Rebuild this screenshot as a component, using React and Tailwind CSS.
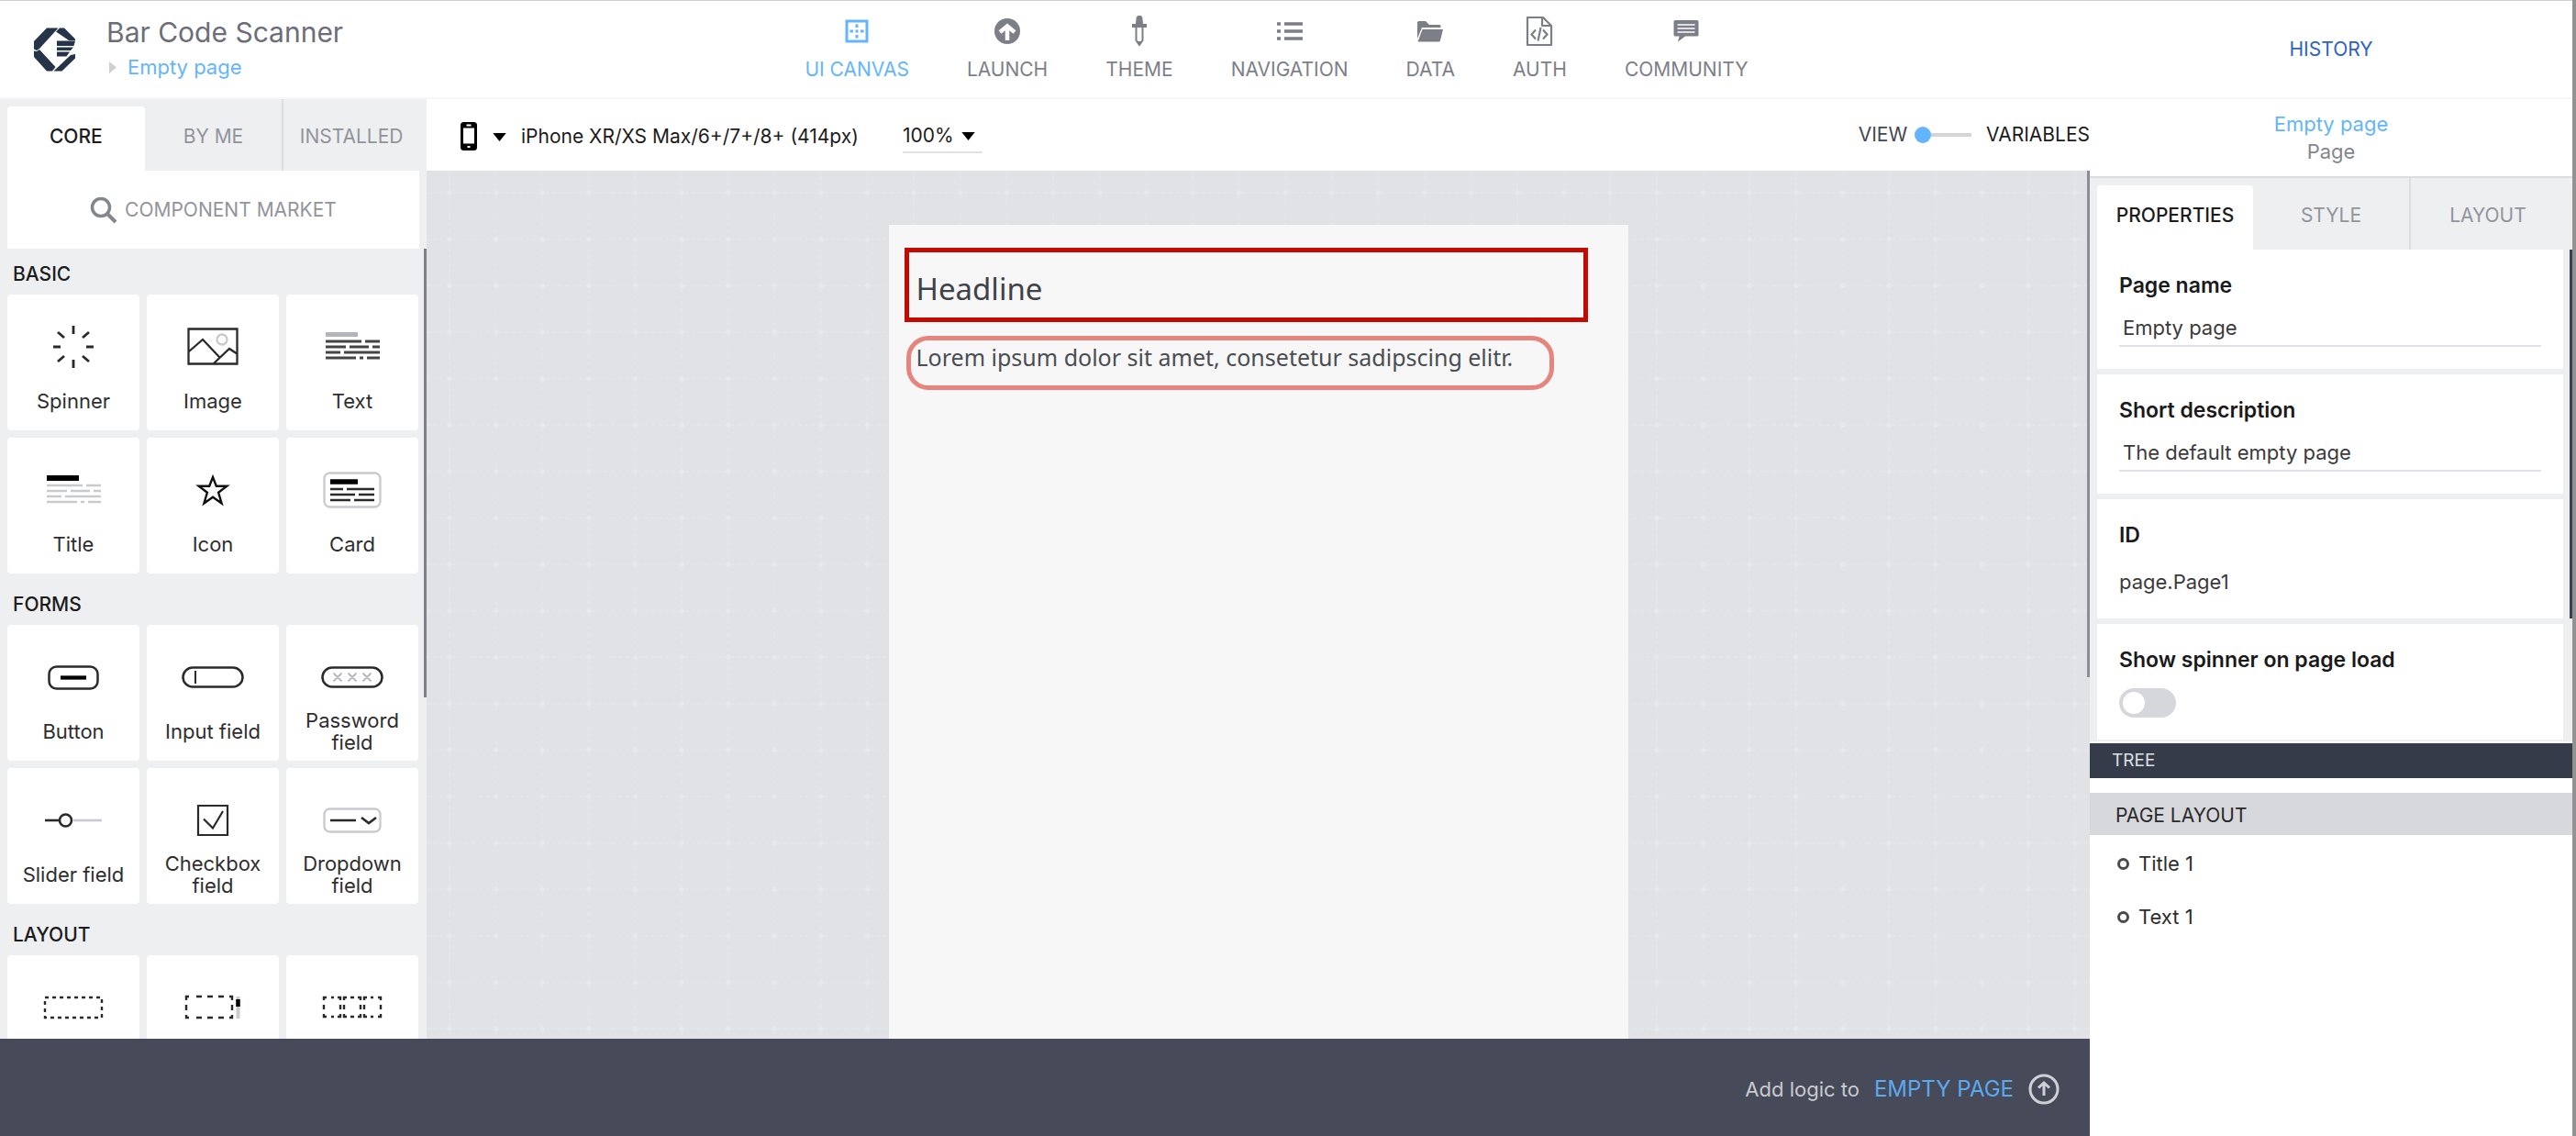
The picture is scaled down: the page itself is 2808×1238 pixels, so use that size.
import React from "react";

const ink = "#2a2a2a";
const pale = "#c9cacf";

/* ---------- component tile drawings ---------- */

const SpinnerArt = () => (
  <svg width="46" height="48" viewBox="0 0 46 48" stroke={ink} strokeWidth="2.800" fill="none">
    <path d="M23 1v9M23 38v9M1 24h8M37 24h8M6 8l7 6M40 8l-7 6M6 40l7-6M40 40l-7-6" />
  </svg>
);

const ImageArt = () => (
  <svg width="56" height="42" viewBox="0 0 56 42" stroke={ink} strokeWidth="2.300" fill="none">
    <circle cx="38" cy="13" r="5.5" stroke={pale} />
    <path d="M1.5 1.5h53v38h-53zM2 26l15-13 18 19M28 40l18-17 9 6" />
  </svg>
);

const textLines = "M0 10h39M43 10h16M0 16h22M26 16h21M51 16h8M0 22h16M20 22h39M0 28h33M37 28h4M45 28h14";

const TextArt = () => (
  <svg width="59" height="32" viewBox="0 0 59 32" fill="none">
    <path d="M0 2.5h35" stroke="#b4b5bb" strokeWidth="5" />
    <path d={textLines} stroke="#444" strokeWidth="2.800" />
  </svg>
);

const TitleArt = () => (
  <svg width="59" height="32" viewBox="0 0 59 32" fill="none">
    <path d="M0 3h35" stroke="#000" strokeWidth="6" />
    <path d={textLines} stroke={pale} strokeWidth="2.600" transform="translate(0 1)" />
  </svg>
);

const StarArt = () => (
  <svg width="38" height="36" viewBox="0 0 38 36" fill="none" stroke="#111" strokeWidth="2.400">
    <path d="M19 4l3.800 9.800h11.500l-9.200 7 3.500 11.700-9.600-6.700-9.600 6.700 3.500-11.700-9.200-7h11.500z" />
  </svg>
);

const CardArt = () => (
  <svg width="64" height="40" viewBox="0 0 64 40" fill="none">
    <rect x="1.500" y="1.500" width="61" height="37" rx="6" stroke={pale} strokeWidth="2.300" />
    <path d="M8 11h30" stroke="#000" strokeWidth="5.500" />
    <path d="M8 19h14M26 19h30M8 25h27M39 25h17M8 31h22M34 31h22" stroke={ink} strokeWidth="2.500" />
  </svg>
);

const ButtonArt = () => (
  <svg width="56" height="27" viewBox="0 0 56 27" fill="none" stroke={ink}>
    <rect x="1.500" y="1.500" width="53" height="24" rx="8" strokeWidth="2.500" />
    <path d="M14 13.500h28" strokeWidth="4.300" stroke="#000" />
  </svg>
);

const InputArt = () => (
  <svg width="68" height="24" viewBox="0 0 68 24" fill="none" stroke={ink}>
    <rect x="1.500" y="1.500" width="65" height="21" rx="10.500" strokeWidth="2.500" />
    <path d="M15 5v14" strokeWidth="2" />
  </svg>
);

const PasswordArt = () => (
  <svg width="68" height="24" viewBox="0 0 68 24" fill="none" stroke={ink}>
    <rect x="1.500" y="1.500" width="65" height="21" rx="10.500" strokeWidth="2.500" />
    <path
      d="M13.500 7.500l9 9m0-9l-9 9M29.500 7.500l9 9m0-9l-9 9M45.500 7.500l9 9m0-9l-9 9"
      strokeWidth="2"
      stroke="#b9bac0"
    />
  </svg>
);

const SliderArt = () => (
  <svg width="62" height="18" viewBox="0 0 62 18" fill="none" stroke={ink} strokeWidth="2.600">
    <path d="M0 9h16" />
    <circle cx="22.500" cy="9" r="6.500" />
    <path d="M31 9h31" stroke={pale} />
  </svg>
);

const CheckArt = () => (
  <svg width="36" height="36" viewBox="0 0 36 36" fill="none" stroke={ink} strokeWidth="2.200">
    <path d="M2 2h32v32H2zM8 16.500l10 10L29 8" />
  </svg>
);

const DropdownArt = () => (
  <svg width="64" height="28" viewBox="0 0 64 28" fill="none" stroke={ink} strokeWidth="2.600">
    <rect x="1.500" y="1.500" width="61" height="25" rx="6" stroke={pale} strokeWidth="2.300" />
    <path d="M8 14h28M42 11l8 6 8-6" />
  </svg>
);

const ContainerArt = () => (
  <svg width="66" height="26" viewBox="0 0 66 26" fill="none" stroke={ink} strokeWidth="2.400">
    <rect x="2" y="2" width="62" height="22" strokeDasharray="4 4" />
  </svg>
);

const ScrollArt = () => (
  <svg width="62" height="28" viewBox="0 0 62 28" fill="none" stroke={ink} strokeWidth="2.400">
    <path d="M2 6V2h3M13 2h6M25 2h6M37 2h6M49 2h3v4M52 11v6M52 22v3h-3M43 25h-6M31 25h-6M19 25h-6M5 25H2v-3M2 17v-6" />
    <path d="M58.500 2v24" stroke={pale} strokeWidth="4" />
    <path d="M58.500 5v8" stroke="#000" strokeWidth="4.500" />
  </svg>
);

const RowArt = () => (
  <svg width="66" height="26" viewBox="0 0 66 26" fill="none" stroke={ink} strokeWidth="2.400">
    <path d="M2 5V2h3M10 2h3M17 2h3v3M20 10v5M20 20v3h-3M13 23h-3M5 23H2v-3M2 15v-5" />
    <path d="M24 5V2h3M31 2h4M39 2h3v3M42 10v5M42 20v3h-3M35 23h-4M27 23h-3v-3M24 15v-5" />
    <path d="M46 5V2h3M53 2h3M61 2h3v3M64 10v5M64 20v3h-3M56 23h-3M49 23h-3v-3M46 15v-5" />
  </svg>
);

/* ---------- header icons ---------- */

const CanvasIcon = () => (
  <svg width="26" height="26" viewBox="0 0 26 26" fill="none" stroke="currentColor">
    <rect x="2" y="2" width="22" height="22" strokeWidth="3" />
    <path d="M13 5.500v3.500M13 11.500v3M13 17v3.500M5.500 13H9M11.500 13h3M17 13h3.500" strokeWidth="3" />
  </svg>
);

const LaunchIcon = () => (
  <svg width="28" height="28" viewBox="0 0 28 28">
    <circle cx="14" cy="14" r="14" fill="currentColor" />
    <path d="M14 24V9M6 15l8-6.500 8 6.500" stroke="#fff" strokeWidth="4.500" fill="none" />
  </svg>
);

const ThemeIcon = () => (
  <svg width="18" height="34" viewBox="0 0 18 34" fill="none" stroke="currentColor">
    <path d="M9 0C6 0 5.500 2 5.500 4L5 9H1v4h16V9h-4l-.5-5C12.500 2 12 0 9 0z" fill="currentColor" stroke="none" />
    <path d="M5.500 12v15L9 32l3.500-5V12" strokeWidth="2" />
    <path d="M6.500 28.500h5L9 32z" fill="currentColor" />
  </svg>
);

const NavIcon = () => (
  <svg width="30" height="22" viewBox="0 0 30 22" stroke="currentColor" strokeWidth="3.600" fill="none">
    <path d="M1 3h4M1 11h4M1 19h4M9 3h20M9 11h20M9 19h20" />
  </svg>
);

const DataIcon = () => (
  <svg width="30" height="24" viewBox="0 0 30 24" fill="currentColor">
    <path d="M1 20V2.500Q1 1 2.500 1H10l4 4h11q1.500 0 1.500 1.500V8H6L1 20z" />
    <path d="M6.500 10H29L26 22q-.5 1.500-1.500 1.500h-23z" />
  </svg>
);

const AuthIcon = () => (
  <svg width="30" height="34" viewBox="0 0 30 34" fill="none" stroke="currentColor" strokeWidth="2.200">
    <path d="M2 2h17l9 9v21H2zM18 2v9h10" strokeLinejoin="round" />
    <path d="M11 15.500l-4.500 5 4.500 5M19 15.500l4.500 5-4.500 5M16.500 13l-3 14.500" />
  </svg>
);

const CommunityIcon = () => (
  <svg width="28" height="26" viewBox="0 0 28 26">
    <path
      d="M2 1h24q1.500 0 1.500 1.500V17q0 1.500-1.500 1.500H13L5 24.500l1.500-6H2Q.500 18.500.500 17V2.500Q.500 1 2 1z"
      fill="currentColor"
    />
    <path d="M4.500 6h19M4.500 10h19M4.500 14h19" stroke="#fff" strokeWidth="1.600" />
  </svg>
);

const Logo = () => (
  <svg width="48" height="50" viewBox="0 0 48 50" fill="#26344a" role="img" aria-label="Home">
    <path d="M1 24.500V16L15 1.500h12.500L7 24l-3 2z" />
    <path d="M29 1.500h5L46 13.500V15h-7L25 5.500z" />
    <path d="M1 26.500l3 .5 3-2 17.500 19-3.500 4.500h-6L1 33z" />
    <path d="M22.500 48.500L41 31l5-1v4.500L31.500 48.500z" />
    <path d="M26 15.500h20l-1.500 5.500H26zM26 22.500h18L41 26H26zM26 27.500h14l-3.500 5H26z" />
  </svg>
);

const Caret = () => (
  <svg width="15" height="9" viewBox="0 0 16 10" fill="#000" aria-hidden="true">
    <path d="M0 0h16L8 10z" />
  </svg>
);

/* ---------- data ---------- */

const nav = [
  ["UI CANVAS", CanvasIcon],
  ["LAUNCH", LaunchIcon],
  ["THEME", ThemeIcon],
  ["NAVIGATION", NavIcon],
  ["DATA", DataIcon],
  ["AUTH", AuthIcon],
  ["COMMUNITY", CommunityIcon],
];

const library = [
  {
    name: "BASIC",
    items: [
      ["Spinner", SpinnerArt],
      ["Image", ImageArt],
      ["Text", TextArt],
      ["Title", TitleArt],
      ["Icon", StarArt],
      ["Card", CardArt],
    ],
  },
  {
    name: "FORMS",
    items: [
      ["Button", ButtonArt],
      ["Input field", InputArt],
      ["Password field", PasswordArt],
      ["Slider field", SliderArt],
      ["Checkbox field", CheckArt],
      ["Dropdown field", DropdownArt],
    ],
  },
  {
    name: "LAYOUT",
    items: [
      ["", ContainerArt],
      ["", ScrollArt],
      ["", RowArt],
    ],
  },
];

/* ---------- parts ---------- */

function Header() {
  return (
    <header className="flex h-27 shrink-0 border-t border-b-2 border-t-[#cdd2d8] border-b-[#f6f6f7] bg-white">
      <div className="flex w-[465px] shrink-0 gap-8 pt-4 pl-9">
        <div className="pt-3">
          <Logo />
        </div>
        <div>
          <h1 className="text-[30px] leading-9 text-[#6b6e78]">Bar Code Scanner</h1>
          <div className="flex items-center gap-3 pl-[3px] text-[22px] leading-10">
            <svg width="8" height="13" viewBox="0 0 8 13" fill="#cfd0d5" aria-hidden="true">
              <path d="M0 0l8 6.500L0 13z" />
            </svg>
            <a href="#page" className="text-[#64b5ff]">
              Empty page
            </a>
          </div>
        </div>
      </div>
      <nav className="flex flex-1 justify-center gap-[63px] pl-10">
        {nav.map(([label, Icon], i) => (
          <button
            key={label}
            className={"flex flex-col items-center pt-[11px] " + (i === 0 ? "text-[#64b5ff]" : "text-[#7d7f88]")}
          >
            <span className="flex h-11 items-center">
              <Icon />
            </span>
            <span className="pt-1 text-[21px] leading-8">{label}</span>
          </button>
        ))}
      </nav>
      <div className="flex w-[526px] shrink-0 items-center justify-center">
        <a href="#history" className="text-[21px] text-[#2c62c9]">
          HISTORY
        </a>
      </div>
    </header>
  );
}

function Tabs({ labels }) {
  return (
    <div role="tablist" className="grid h-[78px] shrink-0 grid-cols-3 pr-2 pl-2 text-[21px]">
      {labels.map((label, i) => (
        <button
          key={label}
          role="tab"
          aria-selected={i === 0}
          className={
            i === 0
              ? "mt-2 rounded-t-sm bg-white pb-1 font-medium text-[#1c1c1c]"
              : i === 1
                ? "pt-1 text-[#92949b]"
                : "border-l-2 border-[#dcdde1] pt-1 text-[#92949b]"
          }
        >
          {label}
        </button>
      ))}
    </div>
  );
}

function Library() {
  return (
    <aside className="relative flex w-[465px] shrink-0 flex-col overflow-hidden bg-[#eeeff1]">
      <Tabs labels={["CORE", "BY ME", "INSTALLED"]} />
      <button className="mr-2 ml-2 flex h-[85px] shrink-0 items-center justify-center gap-2 bg-white text-[21px] text-[#92949b]">
        <svg width="30" height="30" viewBox="0 0 30 30" fill="none" stroke="#84868e" strokeWidth="3.500">
          <circle cx="12" cy="12" r="9.500" />
          <path d="M18.500 18.500L28 28" strokeWidth="4" />
        </svg>
        COMPONENT MARKET
      </button>
      <div className="relative min-h-0 flex-1 overflow-hidden pr-[9px] pl-2">
        {library.map((group) => (
          <section key={group.name} className="pb-1.5">
            <h2 className="flex h-[50px] items-end pb-2 pl-1.5 text-[21px] leading-7 font-medium text-[#1c1c1c]">
              {group.name}
            </h2>
            <div className="grid grid-cols-3 gap-2">
              {group.items.map(([label, Art], i) => (
                <button key={i} className="flex h-[148px] flex-col items-center rounded-sm bg-white pt-[29px]">
                  <span className="flex h-14 items-center">
                    <Art />
                  </span>
                  {label && (
                    <span className="mt-[7px] flex h-12 w-28 items-center justify-center text-center text-[22px] leading-6 text-[#2e2e2e]">
                      {label}
                    </span>
                  )}
                </button>
              ))}
            </div>
          </section>
        ))}
        <div className="absolute top-0 right-0 h-[489px] w-[3px] bg-[#7c818c]" />
      </div>
    </aside>
  );
}

function Toolbar() {
  return (
    <div className="flex h-[78px] shrink-0 items-center justify-between bg-white pl-9 text-[21px] text-[#1c1c1c]">
      <div className="flex items-center pt-1">
        <svg width="20" height="32" viewBox="0 0 20 32" aria-hidden="true">
          <rect x="1" y="0" width="18" height="31" rx="3.500" fill="#000" />
          <path d="M4 6.500h12v17H4z" fill="#fff" />
          <path d="M7.500 3.500h5M8.500 27h3" stroke="#fff" strokeWidth="2" />
        </svg>
        <label className="flex items-center gap-4 pl-4">
          <Caret />
          <select aria-label="Device" className="appearance-none bg-transparent">
            <option>iPhone XR/XS Max/6+/7+/8+ (414px)</option>
          </select>
        </label>
        <label className="ml-12 flex h-9 items-center gap-2 border-b-2 border-[#dfe0e6] pr-2">
          <select aria-label="Zoom" className="appearance-none bg-transparent">
            <option>100%</option>
          </select>
          <Caret />
        </label>
      </div>
      <button role="switch" aria-checked="false" className="flex items-center">
        <span className="text-[#43464f]">VIEW</span>
        <span className="ml-2 h-[18px] w-[18px] rounded-full bg-[#64b5ff]" />
        <span className="mr-4 h-1 w-11 bg-[#d3d5db]" />
        <span>VARIABLES</span>
      </button>
    </div>
  );
}

function Canvas() {
  return (
    <main className="relative flex min-h-0 flex-1 justify-center overflow-hidden bg-[#e1e2e6] pt-[59px]">
      <svg className="absolute inset-0 h-full w-full" aria-hidden="true">
        <defs>
          <pattern id="grid" x="0" y="-1" width="50.620" height="50.620" patternUnits="userSpaceOnUse">
            <path d="M25 0v51M0 25h51" stroke="#e5e6e9" strokeWidth="1.500" strokeDasharray="4 3" />
            <circle cx="25" cy="25" r="2.500" fill="#e8e9eb" />
          </pattern>
        </defs>
        <rect width="100%" height="100%" fill="url(#grid)" />
      </svg>
      <article className="relative flex w-[806px] flex-col items-start bg-[#f7f7f7] pt-[25px] pr-11 pl-[17px]">
        <h2 className="flex h-[81px] w-full items-center border-[5px] border-[#c20a00] pt-2 pl-2 font-['Noto_Sans'] text-[33px] text-[#3f4248]">
          Headline
        </h2>
        <p className="mt-[15px] ml-0.5 flex h-[59px] items-start rounded-3xl border-[5px] border-[#e6857d] pr-10 pl-1.5 font-['Noto_Sans'] text-[25px] leading-9 text-[#4a4d52]">
          Lorem ipsum dolor sit amet, consetetur sadipscing elitr.
        </p>
      </article>
      <div className="absolute top-0 right-0 h-[552px] w-[3px] bg-[#8a8e98]" />
    </main>
  );
}

function Field({ id, label, value }) {
  return (
    <div className="bg-white px-6 py-6">
      <label htmlFor={id} className="block text-[23px] leading-[30px] font-semibold text-[#1a1a1a]">
        {label}
      </label>
      <input
        id={id}
        defaultValue={value}
        className="mt-3 block h-10 w-full border-b-2 border-[#dfe1e6] pl-1 text-[22px] text-[#3a3a3a] outline-none"
      />
    </div>
  );
}

function Inspector() {
  return (
    <aside className="flex w-[526px] shrink-0 flex-col overflow-hidden bg-white">
      <div className="flex h-[86px] shrink-0 flex-col items-center border-b-2 border-[#dcdde2] pt-3 text-[22px]">
        <a href="#page" className="leading-[30px] text-[#64b5ff]">
          Empty page
        </a>
        <span className="leading-[30px] text-[#84868e]">Page</span>
      </div>
      <div className="relative bg-[#eeeff1] pb-0.5">
        <Tabs labels={["PROPERTIES", "STYLE", "LAYOUT"]} />
        <div className="flex flex-col gap-1.5 pr-2.5 pl-2">
          <Field id="page-name" label="Page name" value="Empty page" />
          <Field id="page-description" label="Short description" value="The default empty page" />
          <div className="bg-white px-6 pt-6 pb-5">
            <h3 className="text-[23px] leading-[30px] font-semibold text-[#1a1a1a]">ID</h3>
            <p className="mt-4 text-[22px] leading-10 text-[#3a3a3a]">page.Page1</p>
          </div>
          <div className="bg-white px-6 pt-6 pb-6">
            <label htmlFor="show-spinner" className="block text-[23px] leading-[30px] font-semibold text-[#1a1a1a]">
              Show spinner on page load
            </label>
            <input
              id="show-spinner"
              type="checkbox"
              className="mt-4 block h-8 w-[62px] appearance-none rounded-full bg-[#d6d7dc] p-1 before:block before:h-6 before:w-6 before:rounded-full before:bg-white checked:bg-[#64b5ff] checked:before:ml-[30px]"
            />
          </div>
        </div>
        <div className="absolute top-[78px] right-0 h-[402px] w-[3px] bg-[#3c4151]" />
      </div>
      <h2 className="mt-0.5 flex h-[38px] items-center bg-[#363b4a] pl-6 text-[19px] text-[#dfe0e4]">TREE</h2>
      <h3 className="mt-4 flex h-[46px] items-center bg-[#d7d8dc] pt-1 pl-7 text-[21px] text-[#2a2a2a]">PAGE LAYOUT</h3>
      <ul className="pt-0.5 text-[22px] text-[#2e2e2e]">
        {["Title 1", "Text 1"].map((name) => (
          <li key={name} className="flex h-[58px] items-center gap-2.5 pl-[30px]">
            <span className="h-[13px] w-[13px] rounded-full border-3 border-[#4a4a4a]" />
            {name}
          </li>
        ))}
      </ul>
    </aside>
  );
}

export default function App() {
  return (
    <div className="flex h-screen flex-col overflow-hidden border-r-4 border-[#929292] bg-white font-['Inter',sans-serif]">
      <Header />
      <div className="flex min-h-0 flex-1">
        <div className="flex min-w-0 flex-1 flex-col">
          <div className="flex min-h-0 flex-1">
            <Library />
            <div className="flex min-w-0 flex-1 flex-col">
              <Toolbar />
              <Canvas />
            </div>
          </div>
          <footer className="flex h-[106px] shrink-0 items-center justify-end gap-4 bg-[#474a58] pt-1 pr-[33px]">
            <span className="text-[22px] text-[#c9cad0]">Add logic to</span>
            <button className="flex items-center gap-4 text-[24px] text-[#5ba9ee]">
              EMPTY PAGE
              <svg width="34" height="34" viewBox="0 0 34 34" fill="none" stroke="#cfd0d5" strokeWidth="3">
                <circle cx="17" cy="17" r="15" />
                <path d="M17 24V11M11 15.500l6-5.500 6 5.500" />
              </svg>
            </button>
          </footer>
        </div>
        <Inspector />
      </div>
    </div>
  );
}
